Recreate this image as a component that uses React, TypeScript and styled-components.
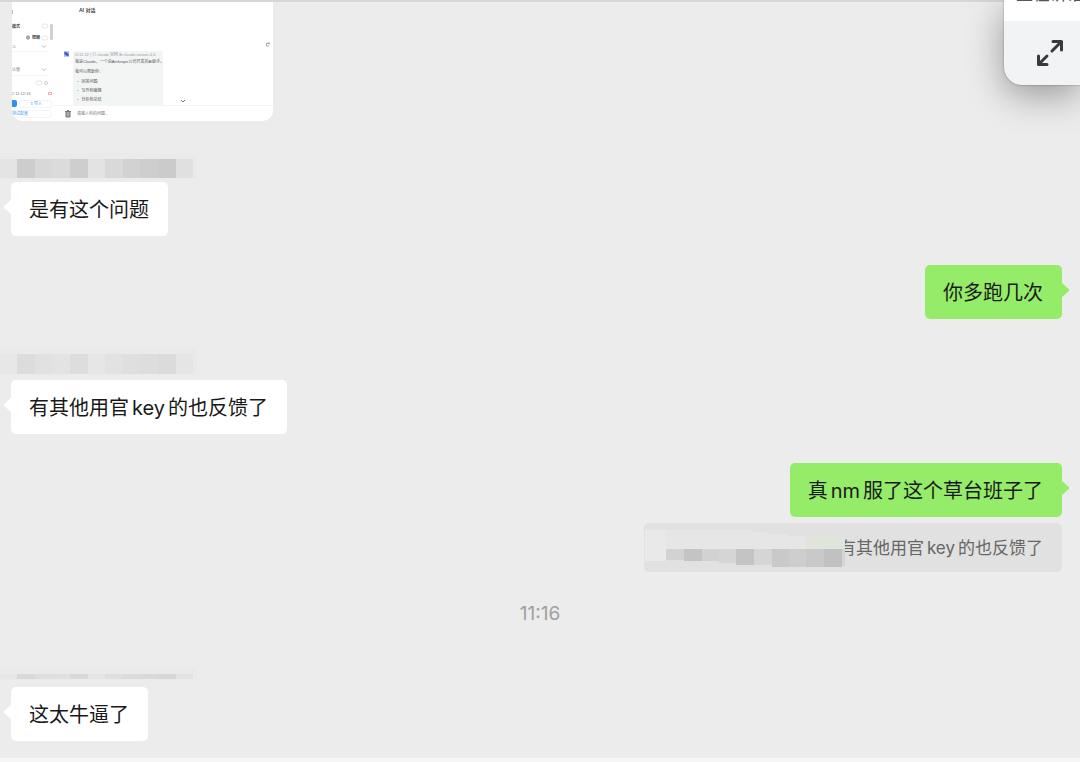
import React from "react";
import styled, { createGlobalStyle } from "styled-components";

const sans = `Inter, "Noto Sans CJK SC", "Liberation Sans", sans-serif`;

const GlobalStyle = createGlobalStyle`
  * { box-sizing: border-box; }
  body { margin: 0; background: #f6f6f6; font-family: ${sans}; color: #191919; }
  p, blockquote, h2, ul { margin: 0; padding: 0; }
`;

const Page = styled.div`
  position: relative;
  overflow: hidden;
  padding-bottom: 4px;
`;

const Thread = styled.main`
  display: flex;
  flex-direction: column;
  padding-bottom: 17px;
  border-top: 2px solid #d6d6d6;
  background: #ececec;
`;

const Preview = styled.section`
  display: grid;
  grid-template-columns: 41px 1fr;
  width: 261px;
  height: 119px;
  margin-left: 12px;
  overflow: hidden;
  background: #fff;
  border-radius: 0 0 10px 10px;
  font-family: "Liberation Sans", "Noto Sans CJK SC", sans-serif;
  font-size: 4px;
  line-height: 6px;
  color: #777;
`;

const Side = styled.div`
  overflow: hidden;
`;

const Drawing = styled.svg`
  display: block;
  flex: none;
`;

const PreviewChat = styled.div`
  display: flex;
  flex-direction: column;
  padding-top: 5px;
`;

const PreviewTitle = styled.h2`
  padding-left: 26px;
  font-size: 5px;
  line-height: 6px;
  font-weight: 700;
  color: #444;
`;

const PreviewBody = styled.div`
  display: flex;
  align-items: flex-start;
  height: 93px;
  padding: 0 3px 0 11px;
  gap: 4px;
  border-bottom: 1px solid #f5f5f5;
`;

const Avatar = styled(Drawing)`
  margin-top: 38px;
`;

const Answer = styled.div`
  width: 90px;
  height: 54px;
  margin-top: 38px;
  padding: 1px 2px;
  border-radius: 2px 2px 0 0;
  background: #f3f5f5;
  white-space: nowrap;
`;

const AnswerMeta = styled.p`
  line-height: 5px;
  color: #99a;
`;

const AnswerLine = styled.p`
  line-height: 10px;
  color: #555;
`;

const AnswerList = styled.ul`
  list-style: none;
  line-height: 9px;
  color: #555;
  & li::before { content: "•"; color: #5aa7e8; margin: 0 3px 0 2px; }
`;

const ScrollDown = styled(Drawing)`
  margin: 86px auto 0 13px;
`;

const Popout = styled(Drawing)`
  margin-top: 29px;
`;

const PreviewInput = styled.div`
  display: flex;
  align-items: center;
  gap: 6px;
  height: 15px;
  padding-left: 12px;
`;

const Name = styled.div<{ $top: number; $gap: number }>`
  margin: ${(p) => p.$top}px 0 ${(p) => p.$gap}px;
`;

const Message = styled.div<{ $mine?: boolean; $top?: number }>`
  display: flex;
  flex-direction: column;
  align-items: ${(p) => (p.$mine ? "flex-end" : "flex-start")};
  gap: 6px;
  margin-top: ${(p) => p.$top ?? 0}px;
  padding: 0 18px 0 11px;
`;

const Bubble = styled.p<{ $mine?: boolean }>`
  position: relative;
  padding: 13px 19px 11px 18px;
  border-radius: 5px;
  background: ${(p) => (p.$mine ? "#95ec69" : "#fff")};
  font-size: 20px;
  line-height: 30px;

  &::before {
    content: "";
    position: absolute;
    top: 17px;
    ${(p) => (p.$mine ? "right" : "left")}: -7px;
    width: 8px;
    height: 16px;
    background: inherit;
    clip-path: ${(p) =>
      p.$mine
        ? "polygon(0 0, 100% 45%, 100% 55%, 0 100%)"
        : "polygon(100% 0, 0 45%, 0 55%, 100% 100%)"};
  }
`;

const Latin = styled.span`
  margin: 0 3px;
`;

const Quote = styled.blockquote`
  display: flex;
  align-items: center;
  height: 49px;
  padding-right: 19px;
  overflow: hidden;
  border-radius: 5px;
  background: #e1e1e1;
  color: #666;
  font-size: 17px;
  line-height: 25px;
`;

const QuoteText = styled.span`
  display: flex;
  justify-content: flex-end;
  width: 198px;
  padding-top: 2px;
  overflow: hidden;
  white-space: nowrap;
`;

const Time = styled.time`
  align-self: center;
  margin-top: 30px;
  color: #a0a0a0;
  font-size: 19px;
  line-height: 24px;
`;

const Panel = styled.aside`
  position: absolute;
  top: 0;
  right: 0;
  width: 76px;
  height: 85px;
  overflow: hidden;
  border-radius: 0 0 0 18px;
  background: #f1f3f5;
  box-shadow: 0 10px 36px rgba(0, 0, 0, 0.36), 0 0 2px rgba(0, 0, 0, 0.4);
`;

const PanelStatus = styled.div`
  display: flex;
  align-items: flex-end;
  height: 21px;
  padding: 0 0 17px 12px;
  background: #fff;
  color: #555;
  font-size: 17px;
  line-height: 20px;
  white-space: nowrap;
`;

const ExpandButton = styled.button`
  display: block;
  margin: 16px 0 0 31px;
  padding: 0;
  border: 0;
  background: none;
`;

type Block = [number, number, string];

const blocks: Block[] = [
  [0, 17, "#e4e4e4"], [17, 18, "#cdcdcd"], [35, 17, "#d8d8d8"], [52, 18, "#dbdbdb"],
  [70, 18, "#cecece"], [88, 17, "#e3e3e3"], [105, 18, "#d9d9d9"], [123, 17, "#d2d2d2"],
  [140, 18, "#cecece"], [158, 18, "#cbcbcb"], [176, 17, "#e0e0e0"],
];

function Mosaic({ height, opacity }: { height: number; opacity: number }) {
  return (
    <Drawing width="200" height={height + 6} aria-hidden="true">
      <rect width="197" height={height + 6} fill="#e9e9e9" opacity="0.6" />
      <g opacity={opacity}>
        {blocks.map(([x, w, fill]) => (
          <rect key={x} x={x} y="6" width={w} height={height - 1} fill={fill} />
        ))}
      </g>
    </Drawing>
  );
}

function QuoteMosaic() {
  return (
    <Drawing width="201" height="49" aria-hidden="true">
      <path d="M1 7h107v2h15v2h20v2h18v2h40v13H1z" fill="#e6e6e6" />
      <path d="M1 7h21v31H1z" fill="#e9e9e9" />
      <path d="M162 14h39v13h-39z" fill="#dfe5da" />
      <path d="M22 26h18v11H22zM58 26h17v12H58z" fill="#d2d2d2" />
      <path d="M40 26h18v12H40z" fill="#c4c4c4" />
      <path d="M75 26h17v14H75z" fill="#d5d5d5" />
      <path d="M92 26h18v16H92z" fill="#c4c4c4" />
      <path d="M110 26h18v16h-18z" fill="#d5d5d5" />
      <path d="M128 26h17v18h-17zM162 26h18v18h-18z" fill="#c9c9c9" />
      <path d="M145 26h17v18h-17z" fill="#cecece" />
      <path d="M180 26h18v18h-18z" fill="#c1c1c1" />
      <path d="M198 26h3v17h-3z" fill="#d5d5d5" />
    </Drawing>
  );
}

function SidePicture() {
  return (
    <Drawing width="42" height="119" fill="none" aria-hidden="true">
      <path d="M0 8v4" stroke="#777" />
      <rect x="38" y="22" width="3" height="16" rx="1" fill="#cfd1d8" />
      <rect x="30" y="22" width="6" height="4" rx="2" stroke="#e8e8e8" />
      <rect x="30" y="34" width="6" height="4" rx="2" stroke="#e8e8e8" />
      <circle cx="16" cy="35.500" r="1.500" stroke="#888" />
      <path d="M14 35.500h4M16 33.500v4" stroke="#888" strokeWidth=".5" />
      <path d="M30 43.500l2 2 2-2M30 66.500l2 2 2-2" stroke="#999" strokeWidth=".7" />
      <path d="M0 49.500h36M0 73.500h36" stroke="#f6f6f6" />
      <rect x="24" y="79" width="6" height="4" rx="2" stroke="#e4e4e4" />
      <circle cx="34" cy="81" r="1.500" stroke="#bbb" strokeWidth=".7" />
      <path d="M36.500 90.500h3v2h-3z" stroke="#eb8585" strokeWidth=".7" />
      <rect x="-4" y="98" width="9" height="7" rx="2" fill="#3291ee" />
      <rect x="7.500" y="98.500" width="32" height="7" rx="2" stroke="#f0f5f9" />
      <rect x="-4" y="108.500" width="43" height="7" rx="2" stroke="#f0f5f9" />
      <g fontSize="4" fill="#777">
        <text x="0" y="26" fontWeight="700" fill="#333">模式</text>
        <text x="20" y="37" fontWeight="700" fill="#333">视频</text>
        <text x="0" y="46">-5</text>
        <text x="0" y="69">认值</text>
        <text x="0" y="93">2 11:12:16</text>
        <text x="18" y="103" fill="#4aa0ed">↥ 导入</text>
        <text x="0" y="113" fill="#4aa0ed">测试配置</text>
      </g>
    </Drawing>
  );
}

export default function App() {
  return (
    <>
      <GlobalStyle />
      <Page>
        <Thread>
          <Preview>
            <Side><SidePicture /></Side>
            <PreviewChat>
              <PreviewTitle>AI 对话</PreviewTitle>
              <PreviewBody>
                <Avatar width="5" height="6" viewBox="0 0 6 6">
                  <rect width="6" height="6" fill="#7f90ea" />
                  <path d="M1 0v3l4 3V3L1 0" fill="#3f55cf" />
                  <path d="M3 0l3 2M0 4l3 2" stroke="#dfe4ff" strokeWidth=".7" />
                </Avatar>
                <Answer>
                  <AnswerMeta>⊡ 11:12 | ⊙ claude 官网 ⊞ claude-sonnet-4-6</AnswerMeta>
                  <AnswerLine>我是Claude，一个由Anthropic公司开发的AI助手。</AnswerLine>
                  <AnswerLine>我可以帮助你：</AnswerLine>
                  <AnswerList>
                    <li>回答问题</li>
                    <li>写作和编辑</li>
                    <li>分析和总结</li>
                  </AnswerList>
                </Answer>
                <ScrollDown width="6" height="5" fill="none" stroke="#777">
                  <path d="M1 1l2 2 2-2" />
                </ScrollDown>
                <Popout width="4" height="5" fill="none" stroke="#888" strokeWidth=".7">
                  <path d="M3 4H.500V1.500H3M2 1h2v2" />
                </Popout>
              </PreviewBody>
              <PreviewInput>
                <Drawing width="6" height="8" viewBox="0 0 6 8" fill="#aaa" stroke="#777">
                  <path d="M0 1.500h6M1 2v5h4V2M2 .500h2" />
                </Drawing>
                <span>请输入你的问题...</span>
              </PreviewInput>
            </PreviewChat>
          </Preview>

          <Name $top={32} $gap={3}><Mosaic height={20} opacity={1} /></Name>
          <Message><Bubble>是有这个问题</Bubble></Message>
          <Message $mine $top={29}><Bubble $mine>你多跑几次</Bubble></Message>

          <Name $top={29} $gap={5}><Mosaic height={21} opacity={0.45} /></Name>
          <Message><Bubble>有其他用官<Latin>key</Latin>的也反馈了</Bubble></Message>
          <Message $mine $top={29}>
            <Bubble $mine>真<Latin>nm</Latin>服了这个草台班子了</Bubble>
            <Quote>
              <QuoteMosaic />
              <QuoteText>有其他用官<Latin>key</Latin>的也反馈了</QuoteText>
            </Quote>
          </Message>

          <Time>11:16</Time>
          <Name $top={42} $gap={7}><Mosaic height={6} opacity={0.6} /></Name>
          <Message><Bubble>这太牛逼了</Bubble></Message>
        </Thread>

        <Panel>
          <PanelStatus>正在讲话</PanelStatus>
          <ExpandButton aria-label="展开">
            <Drawing
              width="32"
              height="32"
              viewBox="0 0 32 32"
              fill="none"
              stroke="#36393d"
              strokeWidth="3"
              strokeLinecap="round"
              strokeLinejoin="round"
            >
              <path d="M17 14L26 5M18 4.500h8.500V13M12 19L4 27M3.500 19v8.500H12" />
            </Drawing>
          </ExpandButton>
        </Panel>
      </Page>
    </>
  );
}
